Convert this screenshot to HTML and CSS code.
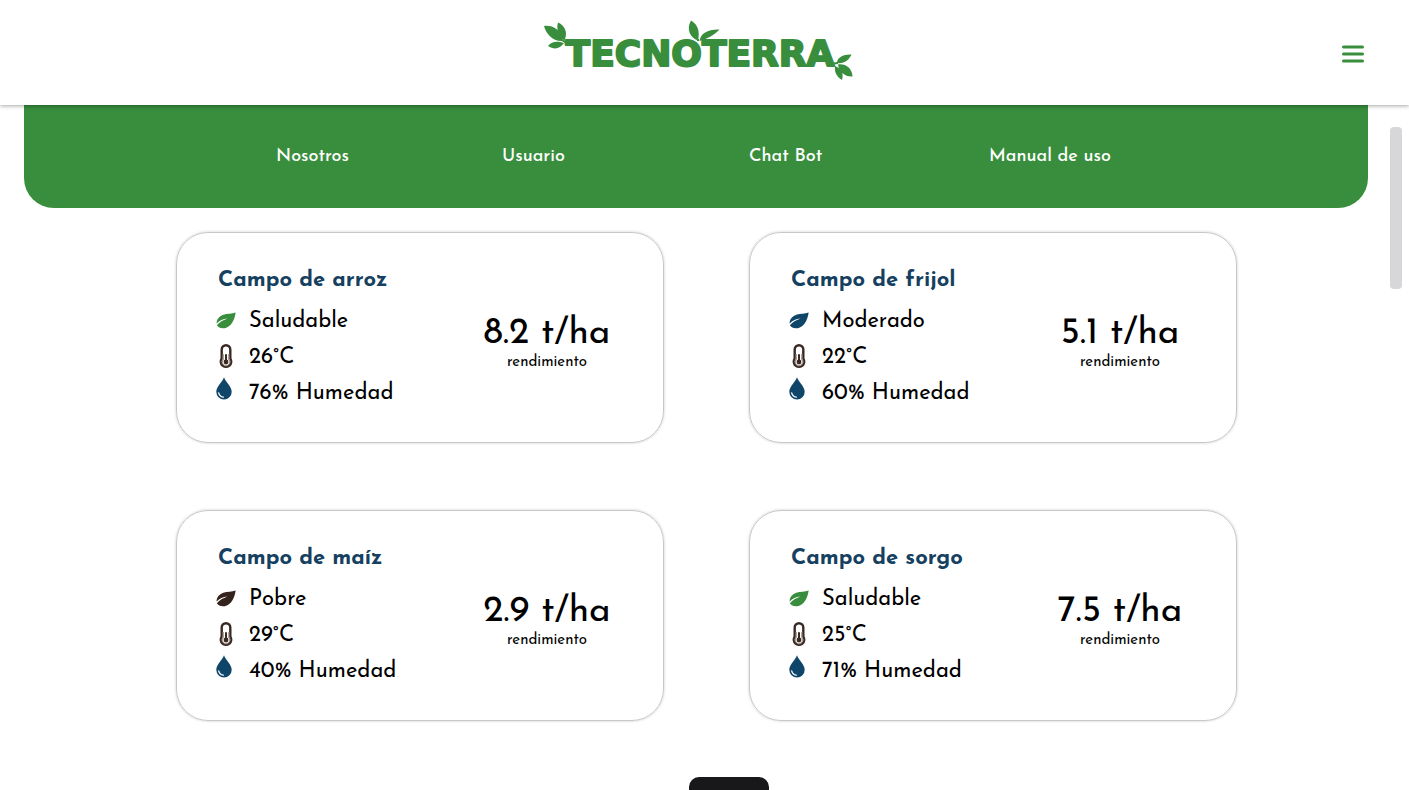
FILE: index.html
```html
<!DOCTYPE html>
<html lang="es">
<head>
<meta charset="utf-8">
<meta name="viewport" content="width=device-width, initial-scale=1">
<title>Tecnoterra</title>
<link rel="stylesheet" href="styles.css">
</head>
<body>
<svg class="sprite" aria-hidden="true">
  <symbol id="leaf" viewBox="0 0 22 18">
    <path fill="currentColor" d="M21.600.2C17.500 2 12.500 1.100 8 2.700C3.300 4.400.4 8.200.7 12.400C4 8.700 7.500 7.500 12.700 6.900C8.500 8.500 4.100 10.500.9 14.300C2.700 17.200 6 18 9.500 17.400C16.500 16.200 20.500 8.500 21.600.2Z"/>
  </symbol>
  <symbol id="thermometer" viewBox="0 0 14 24">
    <path fill="#fff" stroke="#382923" stroke-width="2.400" d="M2.700 5.500a4.300 4.300 0 0 1 8.600 0v9.200a5.200 5.200 0 1 1-8.600 0Z"/>
    <path fill="none" stroke="#a08f88" stroke-width="1.200" d="M4.200 10v5.500a3.700 3.700 0 1 0 5.600 0V10"/>
    <path fill="none" stroke="#382923" stroke-width="2" stroke-linecap="round" d="M7 11v7"/>
    <circle cx="7" cy="18" r="2.400" fill="#382923"/>
  </symbol>
  <symbol id="drop" viewBox="0 0 16 23">
    <path fill="#10456a" d="M8 .3C9.500 5 15.700 9.500 15.700 14.800a7.700 7.700 0 0 1-15.400 0C.3 9.500 6.500 5 8 .3Z"/>
    <path fill="none" stroke="#fff" stroke-width="1.300" stroke-linecap="round" d="M2.700 15.800c.5 2.400 2 3.900 4.600 4.400"/>
  </symbol>
</svg>

<header class="topbar">
  <svg class="logo" viewBox="0 0 314 66" role="img" aria-label="Tecnoterra">
    <text class="logo-text" x="158" y="46" text-anchor="middle">TECNOTERRA</text>
    <g class="logo-leaves">
      <path d="M2 6c8-1 17 3 19 15C11 22 4 14 2 6Z"/>
      <path d="M16 2.500c7 3 10 10 6.500 18C16.500 17 14 9 16 2.500Z"/>
      <path d="M6 26c4-5 9-5 16-3C18 29 12 30 6 26Z"/>
      <path class="stem" d="M20 20l6 4"/>
      <path d="M149 .5c7 4 9 11 7 20C148 18 144 9 149 .5Z"/>
      <path d="M157.500 21c1-8 9-12 20-11.500C172 15 167 18 157.500 21Z"/>
      <path class="stem" d="M156 19v2"/>
      <path d="M295 43c0-6 7-9 14.500-8.500C307 40 302 44 295 43Z"/>
      <path d="M296 44.500c8-1 14 4 14.500 12C303 57 297 52 296 44.500Z"/>
      <path d="M293 46c6 2 9 7 7 14C295 57 292 52 293 46Z"/>
      <path class="stem" d="M288 44l8-1"/>
    </g>
  </svg>
  <button class="menu-button" type="button" aria-label="Menú">
    <svg viewBox="0 0 22 18" aria-hidden="true"><path d="M1.500 2h19M1.500 9h19M1.500 16h19"/></svg>
  </button>
</header>

<nav class="nav" aria-label="Principal">
  <a href="#nosotros">Nosotros</a>
  <a href="#usuario">Usuario</a>
  <a href="#chat">Chat Bot</a>
  <a href="#manual">Manual de uso</a>
</nav>

<main class="fields">
  <article class="card">
    <div class="details">
      <h2>Campo de arroz</h2>
      <ul>
        <li><svg class="leaf healthy" aria-hidden="true"><use href="#leaf"/></svg><span>Saludable</span></li>
        <li><svg class="thermometer" aria-hidden="true"><use href="#thermometer"/></svg><span>26°C</span></li>
        <li><svg class="drop" aria-hidden="true"><use href="#drop"/></svg><span>76% Humedad</span></li>
      </ul>
    </div>
    <p class="yield"><strong>8.2 t/ha</strong><small>rendimiento</small></p>
  </article>
  <article class="card">
    <div class="details">
      <h2>Campo de frijol</h2>
      <ul>
        <li><svg class="leaf moderate" aria-hidden="true"><use href="#leaf"/></svg><span>Moderado</span></li>
        <li><svg class="thermometer" aria-hidden="true"><use href="#thermometer"/></svg><span>22°C</span></li>
        <li><svg class="drop" aria-hidden="true"><use href="#drop"/></svg><span>60% Humedad</span></li>
      </ul>
    </div>
    <p class="yield"><strong>5.1 t/ha</strong><small>rendimiento</small></p>
  </article>
  <article class="card">
    <div class="details">
      <h2>Campo de maíz</h2>
      <ul>
        <li><svg class="leaf poor" aria-hidden="true"><use href="#leaf"/></svg><span>Pobre</span></li>
        <li><svg class="thermometer" aria-hidden="true"><use href="#thermometer"/></svg><span>29°C</span></li>
        <li><svg class="drop" aria-hidden="true"><use href="#drop"/></svg><span>40% Humedad</span></li>
      </ul>
    </div>
    <p class="yield"><strong>2.9 t/ha</strong><small>rendimiento</small></p>
  </article>
  <article class="card">
    <div class="details">
      <h2>Campo de sorgo</h2>
      <ul>
        <li><svg class="leaf healthy" aria-hidden="true"><use href="#leaf"/></svg><span>Saludable</span></li>
        <li><svg class="thermometer" aria-hidden="true"><use href="#thermometer"/></svg><span>25°C</span></li>
        <li><svg class="drop" aria-hidden="true"><use href="#drop"/></svg><span>71% Humedad</span></li>
      </ul>
    </div>
    <p class="yield"><strong>7.5 t/ha</strong><small>rendimiento</small></p>
  </article>
</main>

<div class="scroll-thumb" aria-hidden="true"></div>
<div class="bottom-tab" aria-hidden="true"></div>
</body>
</html>
```
FILE: styles.css
```css
* {
  box-sizing: border-box;
}

body {
  margin: 0;
  background: #fff;
  color: #000;
  font-family: "Josefin Sans", Lato, sans-serif;
}

.sprite {
  position: absolute;
  width: 0;
  height: 0;
}

.topbar {
  position: relative;
  z-index: 1;
  display: grid;
  grid-template-columns: 1fr auto 1fr;
  align-items: center;
  height: 105px;
  padding: 0 45px 0 34px;
  background: #fff;
  box-shadow: 0 1px 4px rgba(0, 0, 0, 0.35);
}

.logo {
  grid-column: 2;
  width: 314px;
  height: 66px;
}

.logo-text {
  fill: #388e3c;
  stroke: #388e3c;
  stroke-width: 2px;
  stroke-linejoin: round;
  font: 700 36px "DejaVu Sans", sans-serif;
}

.logo-leaves {
  fill: #388e3c;
}

.stem {
  fill: none;
  stroke: #388e3c;
  stroke-width: 2px;
}

.menu-button {
  justify-self: end;
  display: flex;
  margin: 3px 0 0;
  padding: 0;
  border: 0;
  background: none;
}

.menu-button svg {
  width: 22px;
  height: 18px;
  fill: none;
  stroke: #388e3c;
  stroke-width: 3px;
  stroke-linecap: round;
}

.nav {
  display: grid;
  grid-template-columns: 226fr 247fr 240fr 379fr;
  align-items: center;
  height: 103px;
  margin: 0 41px 0 24px;
  padding-left: 252px;
  border-radius: 0 0 30px 30px;
  background: #388e3c;
}

.nav a {
  justify-self: start;
  color: #fff;
  font-size: 18px;
  font-weight: 500;
  text-decoration: none;
}

.fields {
  display: grid;
  grid-template-columns: 1fr 1fr;
  gap: 67px 85px;
  padding: 24px 172px 68px 176px;
}

.card {
  display: flex;
  justify-content: space-between;
  padding: 34px 36px 31px 39px;
  border: 1px solid #c8c8c8;
  border-radius: 32px;
  box-shadow: 0 0 3px rgba(0, 0, 0, 0.2);
}

.card h2 {
  margin: 0 0 8px;
  padding-left: 2px;
  color: #15405f;
  font-size: 22px;
  font-weight: 700;
  line-height: 28px;
}

.card ul {
  margin: 0;
  padding: 0;
  list-style: none;
}

.card li {
  display: grid;
  grid-template-columns: 20px auto;
  column-gap: 13px;
  align-items: center;
  height: 36px;
  font-size: 22px;
}

.card li span {
  padding-top: 1px;
}

.leaf {
  width: 20px;
  height: 17px;
  margin-bottom: 1px;
}

.thermometer {
  justify-self: center;
  width: 14px;
  height: 24px;
  margin-bottom: 3px;
}

.drop {
  width: 16px;
  height: 23px;
  margin-bottom: 10px;
}

.healthy {
  color: #388e3c;
}

.moderate {
  color: #10456a;
}

.poor {
  color: #33221d;
}

.yield {
  display: flex;
  flex-direction: column;
  width: 160px;
  margin: 0;
  padding-top: 47px;
  text-align: center;
}

.yield strong {
  font-size: 37px;
  font-weight: 400;
  line-height: 40px;
}

.yield small {
  font-size: 15px;
  line-height: 18px;
}

.scroll-thumb {
  position: fixed;
  top: 127px;
  right: 7px;
  width: 12px;
  height: 162px;
  border-radius: 4px;
  background: #d7d7d9;
}

.bottom-tab {
  position: fixed;
  bottom: 0;
  left: 689px;
  width: 80px;
  height: 13px;
  border-radius: 10px 10px 0 0;
  background: #18181a;
}
```
